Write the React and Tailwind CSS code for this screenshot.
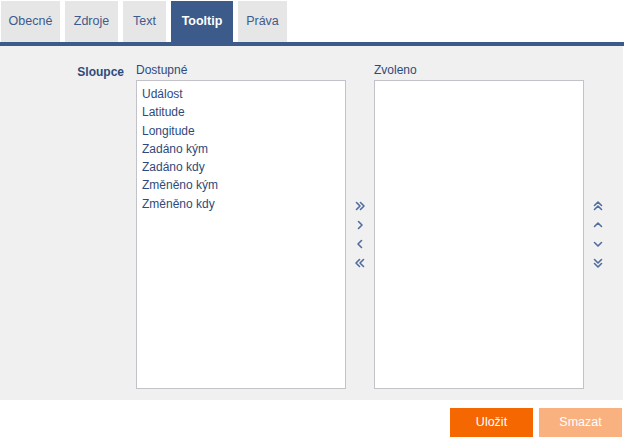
import { useState } from 'react'

const tabs = [
  { label: 'Obecné', w: 'w-[59px]' },
  { label: 'Zdroje', w: 'w-[53px]' },
  { label: 'Text', w: 'w-[43px]' },
  { label: 'Tooltip', w: 'w-[62px]' },
  { label: 'Práva', w: 'w-[49px]' },
]
const available = ['Událost', 'Latitude', 'Longitude', 'Zadáno kým', 'Zadáno kdy', 'Změněno kým', 'Změněno kdy']

function Chevron({ dir = 'right', double = false }) {
  const rot = { right: 0, left: 180, down: 90, up: 270 }[dir]
  return (
    <svg width="12" height="12" viewBox="0 0 12 12" style={{ transform: `rotate(${rot}deg)` }}>
      {double ? (
        <g fill="none" stroke="#4f6d9e" strokeWidth="1.6" strokeLinecap="round" strokeLinejoin="round">
          <path d="M2.5 2.5 L6 6 L2.5 9.5" />
          <path d="M6.5 2.5 L10 6 L6.5 9.5" />
        </g>
      ) : (
        <path d="M4.5 2.5 L8 6 L4.5 9.5" fill="none" stroke="#4f6d9e" strokeWidth="1.6" strokeLinecap="round" strokeLinejoin="round" />
      )}
    </svg>
  )
}

export default function App() {
  const [active, setActive] = useState('Tooltip')

  return (
    <div className="w-[626px] h-[438px] bg-white overflow-hidden" style={{ fontFamily: '"Liberation Sans", Arial, sans-serif' }}>
      <div className="flex gap-[5px] pt-px pl-px h-[42px]">
        {tabs.map(t => (
          <button
            key={t.label}
            onClick={() => setActive(t.label)}
            className={
              t.label === active
                ? `${t.w} h-[41px] bg-[#3c5a8a] text-white font-bold text-[12.5px]`
                : `${t.w} h-[41px] bg-[#e6e6e6] text-[#3e5b8c] text-[12.5px]`
            }
          >
            {t.label}
          </button>
        ))}
      </div>
      <div className="h-[4px] bg-[#3c5a8a] mr-[2px]" />

      <div className="bg-[#f0f0f0] h-[354px] mr-[3px] pt-[17px] flex items-start">
        <div className="w-[124px] text-right text-[12px] leading-[18px] font-bold text-[#2f4a7a]">Sloupce</div>
        <div className="ml-[12px] flex items-start">
          <div className="flex flex-col">
            <div className="text-[12px] text-[#2f4a7a] h-[15px] leading-[15px] mb-[2px]">Dostupné</div>
            <div className="w-[210px] h-[309px] bg-white border border-[#c2c2c8] pt-[4px] pl-[5px]">
              {available.map(a => (
                <div key={a} className="text-[12px] leading-[18.3px] text-[#2f4a7a]">{a}</div>
              ))}
            </div>
          </div>
          <div className="w-[28px] h-[326px] pt-[17px] flex flex-col items-center justify-center gap-[7px]">
            <Chevron dir="right" double />
            <Chevron dir="right" />
            <Chevron dir="left" />
            <Chevron dir="left" double />
          </div>
          <div className="flex flex-col">
            <div className="text-[12px] text-[#2f4a7a] h-[15px] leading-[15px] mb-[2px]">Zvoleno</div>
            <div className="w-[210px] h-[309px] bg-white border border-[#c2c2c8]" />
          </div>
          <div className="w-[28px] h-[326px] pt-[17px] flex flex-col items-center justify-center gap-[7px]">
            <Chevron dir="up" double />
            <Chevron dir="up" />
            <Chevron dir="down" />
            <Chevron dir="down" double />
          </div>
        </div>
      </div>

      <div className="flex justify-end gap-[6px] pt-[8px] pr-[4px]">
        <button className="w-[83px] h-[29px] bg-[#f56700] text-white text-[12.5px]">Uložit</button>
        <button className="w-[83px] h-[29px] bg-[#f8b17f] text-white text-[12.5px]">Smazat</button>
      </div>
    </div>
  )
}
